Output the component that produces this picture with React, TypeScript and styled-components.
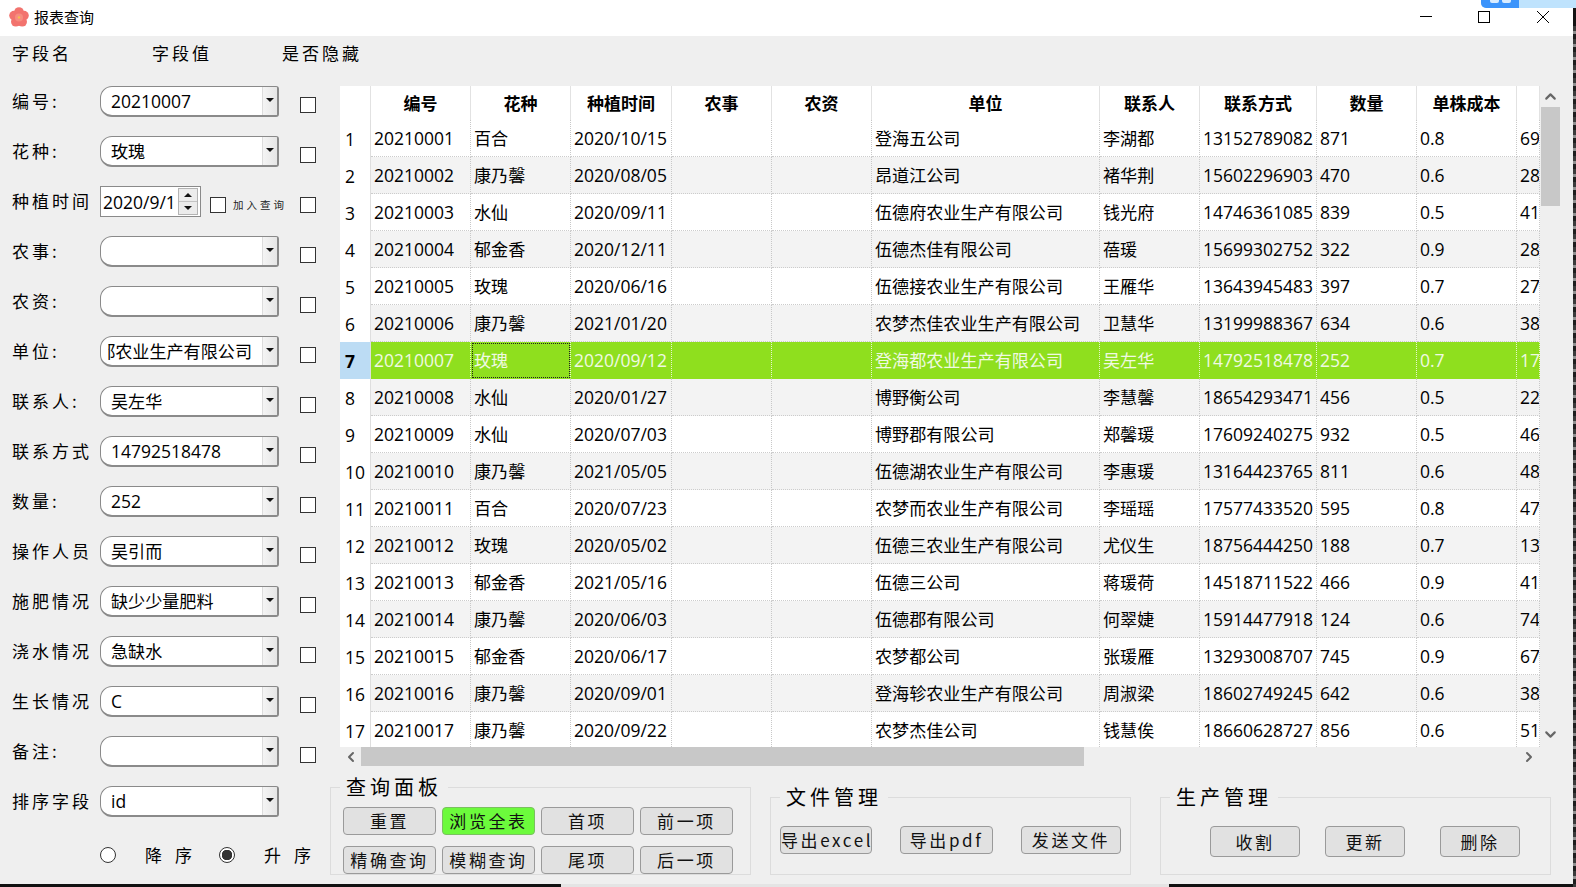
import React from "react";
import styled, { createGlobalStyle } from "styled-components";
import { ChevronUp, ChevronDown, ChevronLeft, ChevronRight } from "lucide-react";

const UI_FONT = `"Open Sans", "Noto Sans CJK SC", sans-serif`;
const LABEL_FONT = `"Noto Sans CJK SC", sans-serif`;
const hasCjk = (s: string) => /[^\x00-\x7f]/.test(s);

const Global = createGlobalStyle`
  html, body { margin: 0; padding: 0; background: #141414; overflow: hidden; }
  * { box-sizing: border-box; }
`;

const Screen = styled.div`
  position: relative;
  width: 1576px;
  height: 887px;
  display: flex;
  overflow: hidden;
  background: #141414;
`;
const Column = styled.div`
  width: 1573px;
  display: flex;
  flex-direction: column;
`;
const RightStrip = styled.div`
  flex: 1;
  margin-top: 26px;
  background: repeating-linear-gradient(180deg, #3a3a3a 0 5px, #8f8f8f 5px 8px, #1e1e1e 8px 13px);
`;
const BlueTab = styled.div`
  position: absolute;
  top: 0;
  right: 0;
  width: 95px;
  height: 8px;
  display: flex;
  border-bottom-left-radius: 5px;
  overflow: hidden;
  background: #bfe3fd;
`;
const BlueTabHead = styled.div`
  width: 38px;
  background: #3c94fb;
  display: flex;
  justify-content: center;
  gap: 3px;
`;
const BlueDot = styled.span`
  width: 9px;
  height: 3px;
  background: #d9ecff;
  border-bottom-left-radius: 2px;
  border-bottom-right-radius: 2px;
`;
const BottomStrip = styled.div`
  height: 3px;
  display: flex;
  background: #111;
`;
const BottomGap = styled.div`
  width: 561px;
`;
const BottomLight = styled.div`
  width: 608px;
  background: #e4e4e4;
`;
const Win = styled.div`
  height: 884px;
  display: flex;
  flex-direction: column;
  background: #efefef;
  color: #000;
`;
const TitleBar = styled.header`
  height: 36px;
  flex: none;
  background: #fff;
  display: flex;
  align-items: center;
  padding: 0 1px 0 9px;
  font: 400 15px/20px ${LABEL_FONT};
`;
const AppIcon = styled.svg`
  width: 20px;
  height: 20px;
  margin: -2px 5px 0 0;
`;
const TitleText = styled.span`
  flex: 1;
  margin-top: -3px;
`;
const WinButton = styled.div`
  width: 58.5px;
  height: 36px;
  padding-bottom: 2px;
  display: flex;
  align-items: center;
  justify-content: center;
`;
const Body = styled.main`
  flex: 1;
  display: flex;
  min-height: 0;
`;
const LeftPanel = styled.section`
  width: 330px;
  flex: none;
  padding-left: 12px;
  display: flex;
  flex-direction: column;
`;
const HeadRow = styled.div`
  height: 33px;
  margin-bottom: 8px;
  display: flex;
  align-items: center;
  white-space: nowrap;
`;
const HeadLabel = styled.span<{ $w: number }>`
  width: ${(p) => p.$w}px;
  flex: none;
  font: 400 17px/24px ${LABEL_FONT};
  letter-spacing: 3px;
`;
const FieldRow = styled.div`
  height: 50px;
  padding-top: 9px;
  display: flex;
  align-items: flex-start;
`;
const FieldLabel = styled.label`
  width: 88px;
  flex: none;
  font: 400 17px/29px ${LABEL_FONT};
  letter-spacing: 3px;
  white-space: nowrap;
`;
const Combo = styled.div`
  width: 179px;
  height: 31px;
  flex: none;
  display: flex;
  background: #fff;
  border: 1px solid #8a8a8a;
  border-right: 2px solid #8a8a8a;
  border-bottom-width: 2px;
  border-radius: 12px 3px 3px 12px;
  overflow: hidden;
`;
const ComboValue = styled.div<{ $clip?: boolean; $cjk?: boolean }>`
  flex: 1;
  min-width: 0;
  margin: ${(p) => (p.$cjk ? 1 : 0)}px 10px 0 ${(p) => (p.$clip ? 7 : 10)}px;
  display: flex;
  justify-content: ${(p) => (p.$clip ? "flex-end" : "flex-start")};
  overflow: hidden;
  white-space: nowrap;
  font: 400 ${(p) => (p.$cjk ? 17.1 : 17.5)}px/28px ${UI_FONT};
`;
const ComboButton = styled.div`
  width: 15px;
  flex: none;
  display: flex;
  align-items: center;
  justify-content: center;
  background: linear-gradient(90deg, #f4f4f4, #e6e6e6);
  border-left: 1px solid #dcdcdc;
  &::after {
    content: "";
    width: 0;
    height: 0;
    border-left: 4px solid transparent;
    border-right: 4px solid transparent;
    border-top: 4px solid #111;
    margin-top: -3px;
  }
`;
const Check = styled.span<{ $small?: boolean }>`
  width: 16px;
  height: 16px;
  flex: none;
  margin: 11px 0 0 ${(p) => (p.$small ? 9 : 21)}px;
  background: #fff;
  border: 1px solid #333;
`;
const DateCell = styled.div`
  width: 179px;
  flex: none;
  display: flex;
  align-items: flex-start;
`;
const DateBox = styled.div`
  width: 101px;
  height: 31px;
  flex: none;
  display: flex;
  align-items: center;
  padding: 2px;
  background: #fff;
  border: 1px solid #8a8a8a;
  font: 400 17.5px/26px ${UI_FONT};
`;
const DateText = styled.span`
  flex: 1;
  white-space: nowrap;
`;
const Spin = styled.div`
  width: 20px;
  height: 27px;
  flex: none;
  display: flex;
  flex-direction: column;
  border: 1px solid #b4b4b4;
  background: #ececec;
`;
const SpinPart = styled.div<{ $down?: boolean }>`
  flex: 1;
  display: flex;
  align-items: center;
  justify-content: center;
  border-top: ${(p) => (p.$down ? "1px solid #c4c4c4" : "none")};
  &::after {
    content: "";
    width: 0;
    height: 0;
    border-left: 4px solid transparent;
    border-right: 4px solid transparent;
    border-${(p) => (p.$down ? "top" : "bottom")}: 4px solid #111;
  }
`;
const TinyText = styled.span`
  margin: 12px 0 0 7px;
  font: 400 10.5px/14px ${LABEL_FONT};
  letter-spacing: 3px;
  white-space: nowrap;
  color: #222;
`;
const RadioRow = styled.div`
  margin-top: 20px;
  padding-left: 88px;
  display: flex;
  gap: 14px;
`;
const RadioItem = styled.div`
  display: flex;
  align-items: center;
  height: 16px;
`;
const Radio = styled.span<{ $on?: boolean }>`
  width: 16px;
  height: 16px;
  flex: none;
  margin-right: 29px;
  border-radius: 50%;
  border: 1px solid #333;
  background: ${(p) => (p.$on ? "radial-gradient(circle, #333 0 5px, #fff 5.5px)" : "#fff")};
`;
const RadioText = styled.span`
  font: 400 17px/24px ${LABEL_FONT};
  letter-spacing: 13px;
  white-space: nowrap;
`;
const RightPanel = styled.section`
  flex: 1;
  min-width: 0;
  display: flex;
  flex-direction: column;
`;
const TableArea = styled.div`
  margin: 50px 0 0 10px;
  display: flex;
  height: 661px;
`;
const TableClip = styled.div`
  width: 1200px;
  height: 661px;
  flex: none;
  overflow: hidden;
  background: #fff;
  font: 400 17.5px/24px ${UI_FONT};
`;
const COLS = "31px 100px 100px 101px 100px 100px 228px 100px 117px 100px 100px 23px";
const Row = styled.div<{ $header?: boolean; $alt?: boolean; $sel?: boolean }>`
  display: grid;
  grid-template-columns: ${COLS};
  height: ${(p) => (p.$header ? 34 : 37)}px;
  background: ${(p) => (p.$sel ? "#8fdf1e" : p.$alt ? "#f3f3f3" : "#fff")};
  color: ${(p) => (p.$sel ? "#f0f9e2" : "#000")};
`;
const HeadCell = styled.div`
  display: flex;
  align-items: center;
  justify-content: center;
  padding-top: 2px;
  overflow: hidden;
  white-space: nowrap;
  font: 700 17px/24px ${UI_FONT};
  border-right: 1px solid #e2e2e2;
  background: #fff;
`;
const NumCell = styled.div<{ $sel?: boolean }>`
  display: flex;
  align-items: center;
  padding-left: 5px;
  background: ${(p) => (p.$sel ? "#bcdcf4" : "#fff")};
  color: #000;
  font-weight: ${(p) => (p.$sel ? 700 : 400)};
  border-right: 1px solid #dedede;
`;
const Cell = styled.div<{ $sel?: boolean; $focus?: boolean; $cjk?: boolean }>`
  display: flex;
  align-items: center;
  padding: ${(p) => (p.$cjk ? 2 : 0)}px 0 0 3px;
  overflow: hidden;
  white-space: nowrap;
  font-size: ${(p) => (p.$cjk ? 17.1 : 17.5)}px;
  border-right: 1px dotted ${(p) => (p.$sel ? "#e8f6d0" : "#c8c8c8")};
  border-bottom: 1px dotted ${(p) => (p.$sel ? "#8fdf1e" : "#cccccc")};
  outline: ${(p) => (p.$focus ? "1px dotted #222" : "none")};
  outline-offset: -2px;
`;
const VScroll = styled.div`
  width: 20px;
  flex: none;
  display: flex;
  flex-direction: column;
  align-items: center;
`;
const VArrow = styled.div<{ $bottom?: boolean }>`
  height: 21px;
  flex: none;
  display: flex;
  align-items: center;
  justify-content: center;
  color: #666;
  margin-top: ${(p) => (p.$bottom ? "auto" : 0)};
  margin-bottom: ${(p) => (p.$bottom ? "2px" : 0)};
`;
const VThumb = styled.div`
  width: 19px;
  height: 99px;
  flex: none;
  align-self: flex-end;
  background: #c8c8c8;
`;
const HScroll = styled.div`
  margin-left: 10px;
  width: 1200px;
  height: 19px;
  flex: none;
  display: flex;
  align-items: stretch;
`;
const HArrow = styled.div`
  width: 21px;
  flex: none;
  display: flex;
  align-items: center;
  justify-content: center;
  color: #666;
`;
const HThumb = styled.div`
  width: 723px;
  flex: none;
  background: #c8c8c8;
`;
const HSpacer = styled.div`
  flex: 1;
`;
const HEnd = styled(HArrow)`
  margin-left: -12px;
  width: 22px;
`;
const GroupRow = styled.div`
  flex: 1;
  margin-top: 21px;
  display: flex;
  align-items: flex-start;
`;
const Group = styled.div<{ $w: number; $top: number; $gap: number }>`
  position: relative;
  width: ${(p) => p.$w}px;
  height: ${(p) => 88 - p.$top}px;
  margin: ${(p) => p.$top}px 0 0 ${(p) => p.$gap}px;
  flex: none;
  border: 1px solid #dcdcdc;
`;
const GroupTitle = styled.span`
  position: absolute;
  top: -15px;
  left: 9px;
  padding: 0 6px;
  background: #efefef;
  font: 400 20px/28px ${LABEL_FONT};
  letter-spacing: 4px;
  white-space: nowrap;
`;
const QueryGrid = styled.div`
  display: grid;
  grid-template-columns: repeat(4, 93px);
  grid-auto-rows: 28px;
  gap: 11px 6px;
  padding: 19px 0 0 12px;
`;
const ButtonLine = styled.div<{ $gap: number; $pad: number }>`
  display: flex;
  gap: ${(p) => p.$gap}px;
  padding: 28px 0 0 ${(p) => p.$pad}px;
`;
const Btn = styled.button<{ $w?: number; $h?: number; $green?: boolean; $ml?: number }>`
  width: ${(p) => (p.$w ? `${p.$w}px` : "auto")};
  height: ${(p) => p.$h ?? 28}px;
  margin-left: ${(p) => p.$ml ?? 0}px;
  padding: 0;
  background: ${(p) => (p.$green ? "#6cfa3c" : "#e1e1e1")};
  border: 1px solid ${(p) => (p.$green ? "#7ac060" : "#9a9a9a")};
  border-radius: 4px;
  font: 400 17px/24px ${LABEL_FONT};
  letter-spacing: 2.6px;
  color: #111;
  white-space: nowrap;
`;

const FIELDS: [string, string][] = [
  ["编号:", "20210007"],
  ["花种:", "玫瑰"],
  ["种植时间", "@date"],
  ["农事:", ""],
  ["农资:", ""],
  ["单位:", "登海都农业生产有限公司"],
  ["联系人:", "吴左华"],
  ["联系方式", "14792518478"],
  ["数量:", "252"],
  ["操作人员", "吴引而"],
  ["施肥情况", "缺少少量肥料"],
  ["浇水情况", "急缺水"],
  ["生长情况", "C"],
  ["备注:", ""],
];

const HEADERS = ["", "编号", "花种", "种植时间", "农事", "农资", "单位", "联系人", "联系方式", "数量", "单株成本", ""];

const ROWS: string[][] = [
  ["20210001", "百合", "2020/10/15", "登海五公司", "李湖都", "13152789082", "871", "0.8", "69"],
  ["20210002", "康乃馨", "2020/08/05", "昂道江公司", "褚华荆", "15602296903", "470", "0.6", "28"],
  ["20210003", "水仙", "2020/09/11", "伍德府农业生产有限公司", "钱光府", "14746361085", "839", "0.5", "41"],
  ["20210004", "郁金香", "2020/12/11", "伍德杰佳有限公司", "蓓瑗", "15699302752", "322", "0.9", "28"],
  ["20210005", "玫瑰", "2020/06/16", "伍德接农业生产有限公司", "王雁华", "13643945483", "397", "0.7", "27"],
  ["20210006", "康乃馨", "2021/01/20", "农梦杰佳农业生产有限公司", "卫慧华", "13199988367", "634", "0.6", "38"],
  ["20210007", "玫瑰", "2020/09/12", "登海都农业生产有限公司", "吴左华", "14792518478", "252", "0.7", "17"],
  ["20210008", "水仙", "2020/01/27", "博野衡公司", "李慧馨", "18654293471", "456", "0.5", "22"],
  ["20210009", "水仙", "2020/07/03", "博野郡有限公司", "郑馨瑗", "17609240275", "932", "0.5", "46"],
  ["20210010", "康乃馨", "2021/05/05", "伍德湖农业生产有限公司", "李惠瑗", "13164423765", "811", "0.6", "48"],
  ["20210011", "百合", "2020/07/23", "农梦而农业生产有限公司", "李瑶瑶", "17577433520", "595", "0.8", "47"],
  ["20210012", "玫瑰", "2020/05/02", "伍德三农业生产有限公司", "尤仪生", "18756444250", "188", "0.7", "13"],
  ["20210013", "郁金香", "2021/05/16", "伍德三公司", "蒋瑗荷", "14518711522", "466", "0.9", "41"],
  ["20210014", "康乃馨", "2020/06/03", "伍德郡有限公司", "何翠婕", "15914477918", "124", "0.6", "74"],
  ["20210015", "郁金香", "2020/06/17", "农梦都公司", "张瑗雁", "13293008707", "745", "0.9", "67"],
  ["20210016", "康乃馨", "2020/09/01", "登海轸农业生产有限公司", "周淑梁", "18602749245", "642", "0.6", "38"],
  ["20210017", "康乃馨", "2020/09/22", "农梦杰佳公司", "钱慧俟", "18660628727", "856", "0.6", "51"],
];

function Flower() {
  return (
    <AppIcon viewBox="0 0 20 20">
      <g fill="#f2736e">
        <circle cx="10" cy="5" r="4.8" />
        <circle cx="15" cy="8.6" r="4.8" />
        <circle cx="13.2" cy="14.8" r="4.8" />
        <circle cx="6.8" cy="14.8" r="4.8" />
        <circle cx="5" cy="8.6" r="4.8" />
      </g>
      <circle cx="10" cy="10.4" r="4" fill="#f68d80" />
      <circle cx="10" cy="10.4" r="1.2" fill="#f5c04a" />
    </AppIcon>
  );
}

function WinControls() {
  return (
    <>
      <WinButton>
        <svg width="14" height="14" viewBox="0 0 14 14">
          <path d="M1 6.5h12" stroke="#000" strokeWidth="1" />
        </svg>
      </WinButton>
      <WinButton>
        <svg width="14" height="14" viewBox="0 0 14 14">
          <rect x="1.5" y="1.5" width="11" height="11" fill="none" stroke="#000" strokeWidth="1" />
        </svg>
      </WinButton>
      <WinButton>
        <svg width="14" height="14" viewBox="0 0 14 14">
          <path d="M1 1l12 12M13 1L1 13" stroke="#000" strokeWidth="1" />
        </svg>
      </WinButton>
    </>
  );
}

function ComboField({ value }: { value: string }) {
  const cjk = hasCjk(value);
  const clip = cjk && value.length > 9;
  return (
    <Combo>
      <ComboValue $clip={clip} $cjk={cjk}>
        {value}
      </ComboValue>
      <ComboButton />
    </Combo>
  );
}

function DateField() {
  return (
    <DateCell>
      <DateBox>
        <DateText>2020/9/1</DateText>
        <Spin>
          <SpinPart />
          <SpinPart $down />
        </Spin>
      </DateBox>
      <Check $small />
      <TinyText>加入查询</TinyText>
    </DateCell>
  );
}

function DataTable() {
  return (
    <TableClip>
      <Row $header>
        {HEADERS.map((h, i) => (
          <HeadCell key={i}>{h}</HeadCell>
        ))}
      </Row>
      {ROWS.map((r, i) => {
        const sel = i === 6;
        const cells = [r[0], r[1], r[2], "", "", r[3], r[4], r[5], r[6], r[7], r[8]];
        return (
          <Row key={r[0]} $alt={i % 2 === 1} $sel={sel}>
            <NumCell $sel={sel}>{i + 1}</NumCell>
            {cells.map((c, j) => (
              <Cell key={j} $sel={sel} $focus={sel && j === 1} $cjk={hasCjk(c)}>
                {c}
              </Cell>
            ))}
          </Row>
        );
      })}
    </TableClip>
  );
}

export default function App() {
  return (
    <Screen>
      <Global />
      <Column>
        <Win>
          <TitleBar>
            <Flower />
            <TitleText>报表查询</TitleText>
            <WinControls />
          </TitleBar>
          <Body>
            <LeftPanel>
              <HeadRow>
                <HeadLabel $w={140}>字段名</HeadLabel>
                <HeadLabel $w={130}>字段值</HeadLabel>
                <HeadLabel $w={80}>是否隐藏</HeadLabel>
              </HeadRow>
              {FIELDS.map(([label, value]) => (
                <FieldRow key={label}>
                  <FieldLabel>{label}</FieldLabel>
                  {value === "@date" ? <DateField /> : <ComboField value={value} />}
                  <Check />
                </FieldRow>
              ))}
              <FieldRow>
                <FieldLabel>排序字段</FieldLabel>
                <ComboField value="id" />
              </FieldRow>
              <RadioRow>
                <RadioItem>
                  <Radio />
                  <RadioText>降序</RadioText>
                </RadioItem>
                <RadioItem>
                  <Radio $on />
                  <RadioText>升序</RadioText>
                </RadioItem>
              </RadioRow>
            </LeftPanel>
            <RightPanel>
              <TableArea>
                <DataTable />
                <VScroll>
                  <VArrow>
                    <ChevronUp size={17} strokeWidth={3} />
                  </VArrow>
                  <VThumb />
                  <VArrow $bottom>
                    <ChevronDown size={17} strokeWidth={3} />
                  </VArrow>
                </VScroll>
              </TableArea>
              <HScroll>
                <HArrow>
                  <ChevronLeft size={16} strokeWidth={3} />
                </HArrow>
                <HThumb />
                <HSpacer />
                <HEnd>
                  <ChevronRight size={16} strokeWidth={3} />
                </HEnd>
              </HScroll>
              <GroupRow>
                <Group $w={421} $top={0} $gap={0}>
                  <GroupTitle>查询面板</GroupTitle>
                  <QueryGrid>
                    <Btn>重置</Btn>
                    <Btn $green>浏览全表</Btn>
                    <Btn>首项</Btn>
                    <Btn>前一项</Btn>
                    <Btn>精确查询</Btn>
                    <Btn>模糊查询</Btn>
                    <Btn>尾项</Btn>
                    <Btn>后一项</Btn>
                  </QueryGrid>
                </Group>
                <Group $w={361} $top={10} $gap={19}>
                  <GroupTitle>文件管理</GroupTitle>
                  <ButtonLine $gap={28} $pad={9}>
                    <Btn $w={92}>导出excel</Btn>
                    <Btn $w={93}>导出pdf</Btn>
                    <Btn $w={100}>发送文件</Btn>
                  </ButtonLine>
                </Group>
                <Group $w={391} $top={10} $gap={29}>
                  <GroupTitle>生产管理</GroupTitle>
                  <ButtonLine $gap={25} $pad={49}>
                    <Btn $w={90} $h={31}>收割</Btn>
                    <Btn $w={80} $h={31}>更新</Btn>
                    <Btn $w={80} $h={31} $ml={10}>删除</Btn>
                  </ButtonLine>
                </Group>
              </GroupRow>
            </RightPanel>
          </Body>
        </Win>
        <BottomStrip>
          <BottomGap />
          <BottomLight />
        </BottomStrip>
      </Column>
      <RightStrip />
      <BlueTab>
        <BlueTabHead>
          <BlueDot />
          <BlueDot />
        </BlueTabHead>
      </BlueTab>
    </Screen>
  );
}
